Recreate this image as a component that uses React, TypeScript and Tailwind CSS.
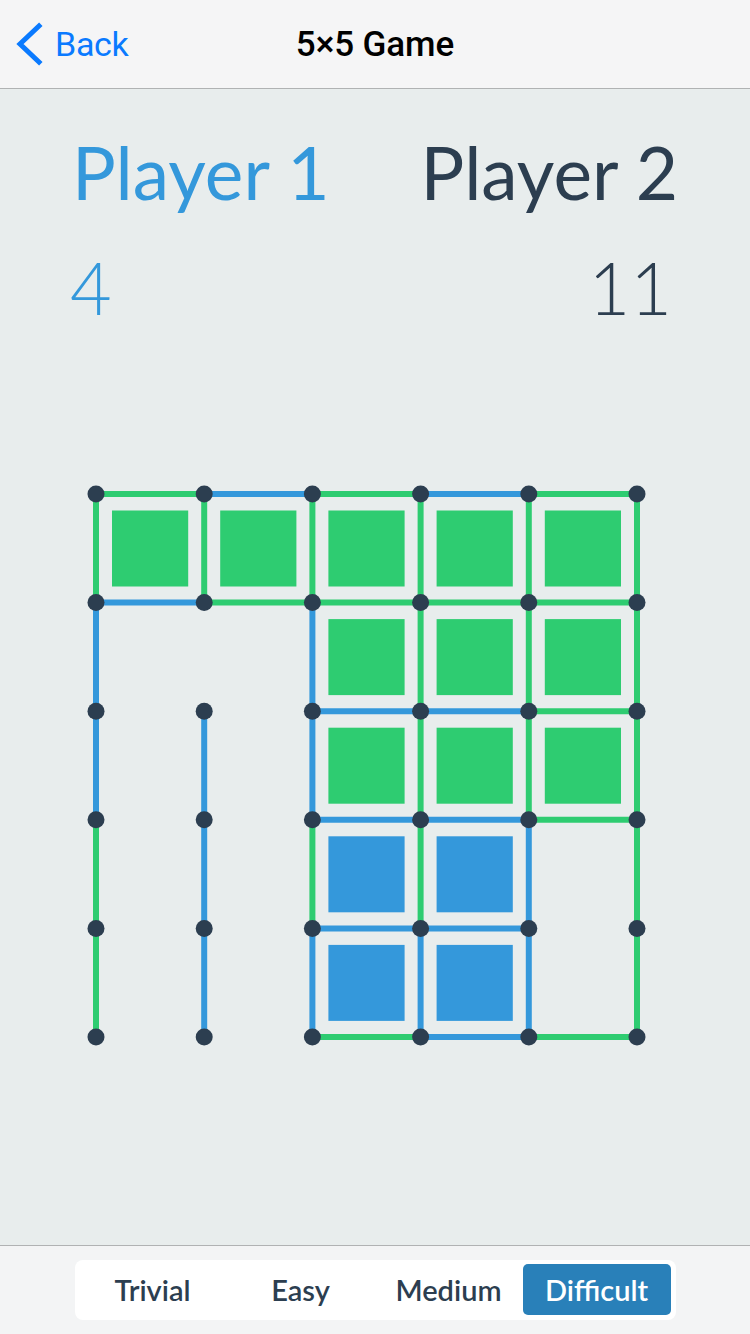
import React from "react";

const BLUE = "#3498db";
const GREEN = "#2ecc71";
const DOT = "#2c3e50";

// horizontal edges: 6 rows x 5
const hEdges = ["gbgbg", "bgggg", "..bbg", "..bbg", "..bb.", "..gbg"];
// vertical edges: 5 spans x 6 cols
const vEdges = ["gggggg", "b.bggg", "bbbggg", "gbggbg", "gbbbbg"];
// boxes: 5 x 5
const boxes = ["ggggg", "..ggg", "..ggg", "..bb.", "..bb."];

const SX = 108.2;
const SY = 108.6;
const O = 9;

const color = (c: string) => (c === "g" ? GREEN : BLUE);

function Board() {
	const px = (i: number) => O + i * SX;
	const py = (j: number) => O + j * SY;

	return (
		<svg width="559" height="561" viewBox="0 0 559 561" className="block">
			{/* 상자 */}
			{boxes.map((row, j) =>
				row.split("").map((c, i) =>
					c === "." ? null : (
						<rect
							key={`b${i}-${j}`}
							x={px(i) + 16}
							y={py(j) + 16.5}
							width={76.2}
							height={76}
							fill={color(c)}
						/>
					),
				),
			)}
			{/* 가로선 */}
			{hEdges.map((row, j) =>
				row.split("").map((c, i) =>
					c === "." ? null : (
						<line
							key={`h${i}-${j}`}
							x1={px(i)}
							y1={py(j)}
							x2={px(i + 1)}
							y2={py(j)}
							stroke={color(c)}
							strokeWidth={6}
						/>
					),
				),
			)}
			{/* 세로선 */}
			{vEdges.map((row, j) =>
				row.split("").map((c, i) =>
					c === "." ? null : (
						<line
							key={`v${i}-${j}`}
							x1={px(i)}
							y1={py(j)}
							x2={px(i)}
							y2={py(j + 1)}
							stroke={color(c)}
							strokeWidth={6}
						/>
					),
				),
			)}
			{/* 점 */}
			{[0, 1, 2, 3, 4, 5].map((j) =>
				[0, 1, 2, 3, 4, 5].map((i) => (
					<circle key={`d${i}-${j}`} cx={px(i)} cy={py(j)} r={8.5} fill={DOT} />
				)),
			)}
		</svg>
	);
}

export default function App() {
	const levels = ["Trivial", "Easy", "Medium", "Difficult"];

	return (
		<div className="w-[750px] h-[1334px] flex flex-col bg-[#e8eded] overflow-hidden">
			{/* 네비게이션 바 */}
			<div
				className="h-[89px] shrink-0 bg-[#f5f5f6] border-b border-[#b0b2b3] relative flex items-center justify-center"
				style={{ fontFamily: "Roboto, 'Liberation Sans', sans-serif" }}
			>
				<div className="absolute left-[15px] top-0 h-[88px] flex items-center gap-[12px] text-[#0a7aff]">
					<svg width="28" height="44" viewBox="0 0 28 44">
						<path
							d="M24 4 L5 22 L24 40"
							fill="none"
							stroke="#0a7aff"
							strokeWidth={5}
							strokeLinecap="square"
						/>
					</svg>
					<span className="text-[34px] leading-none tracking-[-0.3px]">Back</span>
				</div>
				<div className="text-[35px] font-medium text-black leading-none tracking-[-0.1px]">
					5×5 Game
				</div>
			</div>

			{/* 본문 */}
			<div
				className="flex-1 flex flex-col"
				style={{ fontFamily: "Lato, 'Open Sans', sans-serif" }}
			>
				{/* 플레이어 이름 */}
				<div className="mt-[47px] flex justify-between pl-[72px] pr-[72px] text-[73px] leading-none">
					<div className="text-[#3498db]">Player 1</div>
					<div className="text-[#2c3e50]">Player 2</div>
				</div>
				{/* 점수 */}
				<div className="mt-[42px] flex justify-between pl-[70px] pr-[78px] text-[72px] font-light leading-none">
					<div className="text-[#3498db]">4</div>
					<div className="text-[#2c3e50]">11</div>
				</div>
				{/* 게임판 */}
				<div className="mt-[162px] pl-[87px]">
					<Board />
				</div>
			</div>

			{/* 난이도 선택 */}
			<div
				className="h-[89px] shrink-0 bg-[#f3f4f5] border-t border-[#b0b2b3] flex justify-center pt-[14px]"
				style={{ fontFamily: "Lato, 'Open Sans', sans-serif" }}
			>
				<div className="w-[601px] h-[60px] bg-white rounded-[8px] p-[4px] flex">
					{levels.map((l) => (
						<div
							key={l}
							className={
								l === "Difficult"
									? "w-[148px] h-[51px] rounded-[5px] bg-[#2980b9] text-white flex items-center justify-center text-[29px] font-semibold"
									: "w-[148px] h-[51px] text-[#2c3e50] flex items-center justify-center text-[29px] font-semibold"
							}
						>
							{l}
						</div>
					))}
				</div>
			</div>
		</div>
	);
}
